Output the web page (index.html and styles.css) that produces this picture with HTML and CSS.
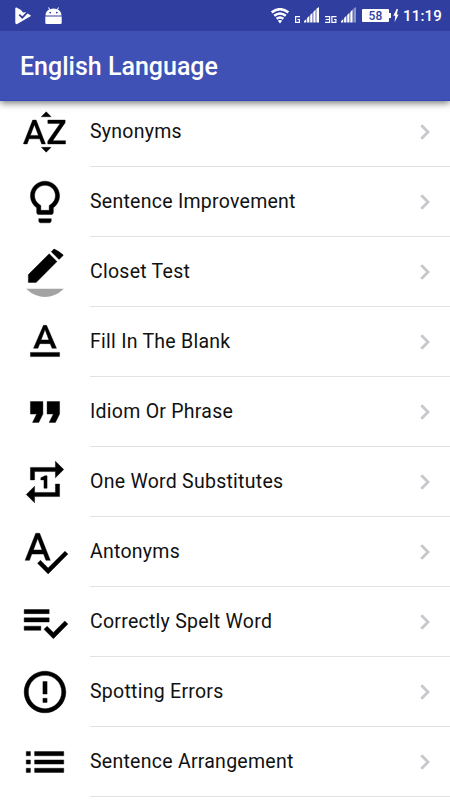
FILE: index.html
```html
<!DOCTYPE html>
<html lang="en">
<head>
  <meta charset="utf-8">
  <title>English Language</title>
  <link rel="stylesheet" href="styles.css">
</head>
<body>
  <header class="header">
    <div class="status-bar">
      <svg class="store" width="17" height="18" viewBox="0 0 17 18">
        <path d="M1.5.5L6 3l2 2.5L10.5 5.3 15.5 8.2q.8.5 0 1L2.6 16.8Q.5 17.8.3 15.8V1.2Q.5.2 1.5.5z" fill="#fff"/>
        <path d="M4.3 7.6l3 3 5-5.3" fill="none" stroke="#303f9f" stroke-width="1.8"/>
      </svg>
      <svg class="android" width="17" height="18" viewBox="0 0 17 18">
        <path d="M.5 8.6C.5 5.500 2 3.700 4.200 2.600L3 .8l.7-.5L5.100 2.200Q8.500 1 11.900 2.200L13.300.3l.7.5-1.200 1.800C15 3.700 16.500 5.500 16.500 8.600zM.3 9.600h16.400v6.200q0 1.200-1.200 1.200h-14Q.3 17 .3 15.800z" fill="#fff"/>
        <circle cx="5.2" cy="5.6" r=".9" fill="#303f9f"/>
        <circle cx="11.8" cy="5.6" r=".9" fill="#303f9f"/>
      </svg>
      <div class="status-right">
        <svg class="wifi" width="18" height="16" viewBox="0 0 18 16">
          <g fill="none" stroke="#fff" stroke-width="2.5">
            <path d="M.7 4.4Q9-2 17.3 4.4"/>
            <path d="M3.2 7.7Q9 3.2 14.8 7.7"/>
            <path d="M5.6 10.8Q9 8.2 12.4 10.8"/>
          </g>
          <path d="M6.8 12.8Q9 11.2 11.2 12.8L9 15.4z" fill="#fff"/>
        </svg>
        <svg class="net" width="5" height="7" viewBox="0 0 5 7">
          <path d="M5 .6H.6v5.8h3.8V3.5H2.5" fill="none" stroke="#fff" stroke-width="1.2"/>
        </svg>
        <svg class="signal" width="15" height="16" viewBox="0 0 15 16">
          <path d="M0 15.5v-1.3l2.3-2.3v3.6zM3.1 15.5v-4.4l2.3-2.3v6.7zM6.2 15.5V8l2.3-2.3v9.8zM9.3 15.5V4.9l2.3-2.3v12.9zM12.4 15.5V1.8L15 0v15.5z" fill="#fff"/>
        </svg>
        <svg class="net" width="12" height="7" viewBox="0 0 12 7">
          <path d="M0 .6h4.6v5.8H0M.6 3.5h4M11.5.6H6.9v5.8h4V3.5H9" fill="none" stroke="#fff" stroke-width="1.2"/>
        </svg>
        <svg class="signal" width="15" height="16" viewBox="0 0 15 16">
          <path d="M0 15.5v-1.3l2.3-2.3v3.6zM3.1 15.5v-4.4l2.3-2.3v6.7zM6.2 15.5V8l2.3-2.3v9.8zM9.3 15.5V4.9l2.3-2.3v12.9z" fill="#fff"/>
          <path d="M12.4 15.5V1.8L15 0v15.5z" fill="#fff" opacity=".45"/>
        </svg>
        <span class="battery">58</span>
        <svg class="bolt" width="6" height="13" viewBox="0 0 6 13">
          <path d="M3.6 0L.4 6.8h1.9L1.6 13l4-7.5H3.8L5 0z" fill="#fff"/>
        </svg>
        <span class="clock">11:19</span>
      </div>
    </div>
    <h1 class="title">English Language</h1>
  </header>

  <ul class="list">
    <li class="item">
      <svg class="icon" viewBox="0 0 24 24"><path d="M14.94 4.66h-4.72l2.36-2.36zm-4.69 14.71h4.66l-2.33 2.33zM6.1 6.27L1.6 17.73h1.84l.92-2.45h5.11l.92 2.45h1.84L7.74 6.27H6.1zm-1.13 7.37l1.94-5.18 1.94 5.18H4.97zm10.76 2.5h6.12v1.59h-8.53v-1.29l5.92-8.56h-5.88v-1.6h8.3v1.26l-5.93 8.6z"/></svg>
      <div class="inner"><span class="label">Synonyms</span><svg class="arrow" viewBox="0 0 10 16"><path d="M1.3 1.3L8 8l-6.7 6.7"/></svg></div>
    </li>
    <li class="item">
      <svg class="icon" viewBox="0 0 24 24"><path d="M9 21c0 .55.45 1 1 1h4c.55 0 1-.45 1-1v-1H9v1zm3-19C8.14 2 5 5.14 5 9c0 2.38 1.19 4.47 3 5.74V17c0 .55.45 1 1 1h6c.55 0 1-.45 1-1v-2.26c1.81-1.27 3-3.36 3-5.74 0-3.86-3.14-7-7-7zm2.85 11.1l-.85.6V16h-4v-2.3l-.85-.6C7.8 12.16 7 10.63 7 9c0-2.76 2.24-5 5-5s5 2.24 5 5c0 1.63-.8 3.16-2.15 4.1z"/></svg>
      <div class="inner"><span class="label">Sentence Improvement</span><svg class="arrow" viewBox="0 0 10 16"><path d="M1.3 1.3L8 8l-6.7 6.7"/></svg></div>
    </li>
    <li class="item">
      <svg class="icon" viewBox="0 0 24 24"><path d="M17.75 7L14 3.25l-10 10V17h3.75l10-10zm2.96-2.96c.39-.39.39-1.02 0-1.41L18.37.29c-.39-.39-1.02-.39-1.41 0L15 2.25 18.75 6l1.96-1.96z"/><path class="shade" d="M0 20h24v4H0z"/></svg>
      <div class="inner"><span class="label">Closet Test</span><svg class="arrow" viewBox="0 0 10 16"><path d="M1.3 1.3L8 8l-6.7 6.7"/></svg></div>
    </li>
    <li class="item">
      <svg class="icon" viewBox="0 0 24 24"><path d="M5 17v2h14v-2H5zm4.5-4.2h5l.9 2.2h2.1L12.75 4h-1.5L6.5 15h2.1l.9-2.2zM12 5.98L13.87 11h-3.74L12 5.98z"/></svg>
      <div class="inner"><span class="label">Fill In The Blank</span><svg class="arrow" viewBox="0 0 10 16"><path d="M1.3 1.3L8 8l-6.7 6.7"/></svg></div>
    </li>
    <li class="item">
      <svg class="icon" viewBox="0 0 24 24"><path d="M6 17h3l2-4V7H5v6h3zm8 0h3l2-4V7h-6v6h3z"/></svg>
      <div class="inner"><span class="label">Idiom Or Phrase</span><svg class="arrow" viewBox="0 0 10 16"><path d="M1.3 1.3L8 8l-6.7 6.7"/></svg></div>
    </li>
    <li class="item">
      <svg class="icon" viewBox="0 0 24 24"><path d="M7 7h10v3l4-4-4-4v3H5v6h2V7zm10 10H7v-3l-4 4 4 4v-3h12v-6h-2v4zm-4-2V9h-1l-2 1v1h1.5v4H13z"/></svg>
      <div class="inner"><span class="label">One Word Substitutes</span><svg class="arrow" viewBox="0 0 10 16"><path d="M1.3 1.3L8 8l-6.7 6.7"/></svg></div>
    </li>
    <li class="item">
      <svg class="icon" viewBox="0 0 24 24"><path d="M12.45 16h2.09L9.43 3H7.57L2.46 16h2.09l1.12-3h5.64l1.14 3zm-6.02-5L8.5 5.48 10.57 11H6.43zm15.16.59l-8.09 8.09L9.83 16l-1.41 1.41 5.09 5.09L23 13l-1.41-1.41z"/></svg>
      <div class="inner"><span class="label">Antonyms</span><svg class="arrow" viewBox="0 0 10 16"><path d="M1.3 1.3L8 8l-6.7 6.7"/></svg></div>
    </li>
    <li class="item">
      <svg class="icon" viewBox="0 0 24 24"><path d="M14 10H2v2h12v-2zm0-4H2v2h12V6zM2 16h8v-2H2v2zm19.5-4.5L23 13l-6.99 7-4.51-4.5L13 14l3.01 3 5.49-5.5z"/></svg>
      <div class="inner"><span class="label">Correctly Spelt Word</span><svg class="arrow" viewBox="0 0 10 16"><path d="M1.3 1.3L8 8l-6.7 6.7"/></svg></div>
    </li>
    <li class="item">
      <svg class="icon" viewBox="0 0 24 24"><path d="M11 15h2v2h-2zm0-8h2v6h-2zm.99-5C6.47 2 2 6.48 2 12s4.47 10 9.99 10C17.52 22 22 17.52 22 12S17.52 2 11.99 2zM12 20c-4.42 0-8-3.58-8-8s3.58-8 8-8 8 3.58 8 8-3.58 8-8 8z"/></svg>
      <div class="inner"><span class="label">Spotting Errors</span><svg class="arrow" viewBox="0 0 10 16"><path d="M1.3 1.3L8 8l-6.7 6.7"/></svg></div>
    </li>
    <li class="item">
      <svg class="icon" viewBox="0 0 24 24"><path d="M3 13h2v-2H3v2zm0 4h2v-2H3v2zm0-8h2V7H3v2zm4 4h14v-2H7v2zm0 4h14v-2H7v2zM7 7v2h14V7H7z"/></svg>
      <div class="inner"><span class="label">Sentence Arrangement</span><svg class="arrow" viewBox="0 0 10 16"><path d="M1.3 1.3L8 8l-6.7 6.7"/></svg></div>
    </li>
  </ul>
</body>
</html>
```
FILE: styles.css
```css
* {
  box-sizing: border-box;
}

body {
  margin: 0;
  height: 800px;
  overflow: hidden;
  background: #fff;
  font-family: Roboto, "Liberation Sans", sans-serif;
  color: #111;
}

/* header */
.header {
  position: relative;
  z-index: 1;
  height: 101px;
  background: #3f51b5;
  border-bottom: 1px solid #3048b8;
  box-shadow: 0 2px 7px rgba(0, 0, 0, 0.55);
}

.status-bar {
  display: flex;
  align-items: flex-start;
  height: 31px;
  padding: 7px 8px 0 15px;
  background: #303f9f;
}

.android {
  margin-left: 13px;
}

.status-right {
  display: flex;
  margin-left: auto;
}

.wifi {
  margin-top: 1px;
}

.net {
  margin: 9px 4px 0 6px;
}

.battery {
  position: relative;
  width: 27px;
  height: 13px;
  margin: 2px 0 0 6px;
  border-radius: 1px;
  background: #fff;
  color: #303f9f;
  font-size: 12px;
  font-weight: 500;
  line-height: 14px;
  text-align: center;
}

/* battery tip */
.battery::after {
  content: "";
  position: absolute;
  top: 4px;
  right: -2px;
  width: 2px;
  height: 5px;
  background: #fff;
}

.bolt {
  margin: 2px 0 0 4px;
}

.clock {
  margin-left: 4px;
  color: #fff;
  font-size: 15px;
  font-weight: 500;
  letter-spacing: 0.2px;
  line-height: 18px;
}

.title {
  margin: 0;
  padding-left: 20px;
  color: #fff;
  font-size: 25px;
  font-weight: 500;
  line-height: 72px;
}

/* list, the first row starts under the header */
.list {
  margin: -4px 0 0;
  padding: 0;
  list-style: none;
}

.item {
  display: flex;
  align-items: center;
  height: 70px;
  padding-left: 20px;
}

.icon {
  flex: none;
  width: 50px;
  height: 50px;
  margin-right: 20px;
  border-radius: 50%;
  stroke: #000;
  stroke-width: 0.2;
}

.shade {
  fill: #a3a3a3;
  stroke: none;
}

.inner {
  display: flex;
  flex: 1;
  align-items: center;
  justify-content: space-between;
  height: 70px;
  padding-right: 20px;
  border-bottom: 1px solid #e3e3e5;
}

.label {
  padding-bottom: 1px;
  font-size: 19.5px;
  letter-spacing: 0.26px;
}

.arrow {
  width: 10px;
  height: 16px;
  fill: none;
  stroke: #c7c7cc;
  stroke-width: 2.8;
}
```
